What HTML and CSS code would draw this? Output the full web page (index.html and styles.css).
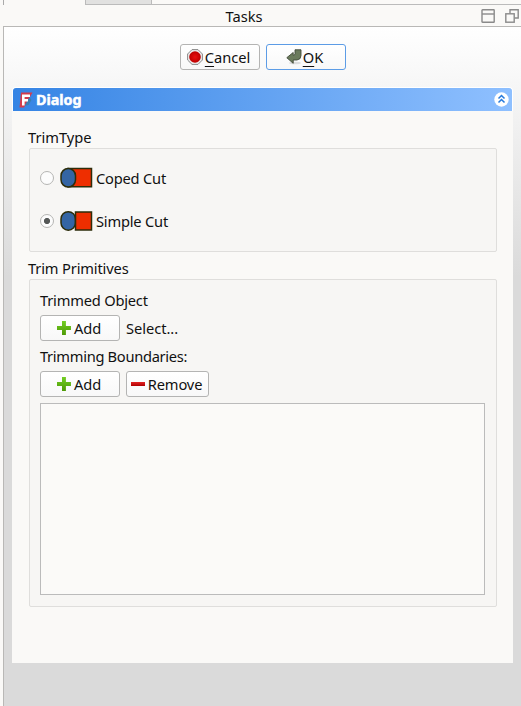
FILE: index.html
```html
<!DOCTYPE html>
<html lang="en">
<head>
<meta charset="utf-8">
<title>Tasks</title>
<link rel="stylesheet" href="styles.css">
</head>
<body>
<div class="tabs"><span class="tab current"></span><span class="tab other"></span><span class="tab-rest"></span></div>
<header class="dock-title">
  <h1>Tasks</h1>
  <div class="dock-icons">
    <svg width="14" height="14" viewBox="0 0 14 14"><rect x="1" y=".75" width="12.2" height="12.5" rx=".5"/><path d="M1 5h12"/></svg>
    <svg width="14" height="14" viewBox="0 0 14 14"><path d="M5 4.5V.8h8.2V9H9.5"/><rect x=".8" y="4.8" width="8.4" height="8.4"/></svg>
  </div>
</header>
<main class="panel">
  <div class="actions">
    <button class="btn cancel"><svg width="16" height="16" viewBox="0 0 16 16"><defs><radialGradient id="red"><stop offset="0" stop-color="#e81010"/><stop offset="1" stop-color="#bd0000"/></radialGradient></defs><path d="M5 .6h6L15.400 5v6L11 15.400H5L.6 11V5z" fill="#eee" stroke="#888"/><circle cx="8" cy="8" r="5.800" fill="url(#red)"/></svg><span><u>C</u>ancel</span></button>
    <button class="btn ok"><svg width="17" height="16" viewBox="0 0 17 16"><ellipse cx="9" cy="14" rx="6" ry="1.300" fill="#ddd"/><path d="M9 .8h6v5.700q0 4-4 4.500H7.200v3.300L.8 8.700l6.400-5.200v2.800q1.800 0 1.800-1.600z" fill="#6b7b5c" stroke="#414a38" stroke-width=".9"/></svg><span><u>O</u>K</span></button>
  </div>
  <section class="task">
    <h2><svg width="14" height="16" viewBox="0 0 14 16"><path d="M2 .5h11.500L11 5 5 15.500H.5z" fill="#d33c4c"/><path d="M10.500 5l2 3-3 5-4 1z" fill="#3b7fb0"/><path d="M4.300 13.500V3.700H11M4.300 8.300H9" fill="none" stroke="#fff" stroke-width="2.600"/></svg><span>Dialog</span><svg class="collapse" width="15" height="15" viewBox="0 0 15 15"><circle cx="7.500" cy="7.500" r="7.200" fill="#fff"/><path d="M4.500 6.500L7.500 3.500 10.500 6.500M4.500 10.500L7.500 7.500 10.500 10.500" fill="none" stroke="#2579dc" stroke-width="1.500"/></svg></h2>
    <div class="content">
      <h3>TrimType</h3>
      <div class="group types">
        <label class="choice"><i class="radio"></i><svg width="33" height="22" viewBox="0 0 33 22"><g stroke="#2d2d0a" stroke-width="1.500"><path d="M8 1.500h23.500v18.300H8z" fill="#ee2e00"/><rect x="1" y="1.500" width="14.500" height="18.500" rx="7.200" fill="#3465a4"/></g></svg><span>Coped Cut</span></label>
        <label class="choice"><i class="radio checked"></i><svg width="33" height="22" viewBox="0 0 33 22"><g stroke="#2d2d0a" stroke-width="1.500"><rect x="1" y="1.700" width="14.500" height="18.500" rx="7.200" fill="#3465a4"/><path d="M15.500 2h16v18h-16z" fill="#ee2e00"/></g></svg><span>Simple Cut</span></label>
      </div>
      <h3 class="second">Trim Primitives</h3>
      <div class="group primitives">
        <div class="text">Trimmed Object</div>
        <div class="row"><button class="btn add"><i class="plus"></i><span>Add</span></button><span class="selection">Select...</span></div>
        <div class="text boundaries">Trimming Boundaries:</div>
        <div class="row"><button class="btn add"><i class="plus"></i><span>Add</span></button><button class="btn remove"><i class="minus"></i><span>Remove</span></button></div>
        <div class="list"></div>
      </div>
    </div>
  </section>
</main>
</body>
</html>
```
FILE: styles.css
```css
* { box-sizing: border-box; }
html, body { height: 100%; }
body { margin: 0; height: 706px; overflow: hidden; display: flex; flex-direction: column; background: #faf9f7; color: #111; font: 14.667px/20px "Noto Sans", sans-serif; }
h1, h2, h3 { margin: 0; font: inherit; }
svg { display: block; flex: none; }
.tabs { display: flex; height: 5px; padding-left: 3px; }
.tab.current { width: 82px; border-left: 1px solid #aaa; }
.tab.other { width: 67px; background: #e1e1e0; border: solid #bbb; border-width: 0 1px 1px; }
.tab-rest { flex: 1; border-bottom: 1px solid #bbb; }
.dock-title { height: 21px; position: relative; }
.dock-title h1 { text-align: center; line-height: 22px; padding-right: 33px; }
.dock-icons { position: absolute; right: 2px; top: 4px; display: flex; gap: 10px; }
.dock-icons svg { fill: none; stroke: #8a8a8a; stroke-width: 1.400; }
.panel { flex: 1; margin-left: 3px; border: solid #b9b8b6; border-width: 1px 0 0 1px; padding: 17px 8px 0; background: linear-gradient(#fff, #dadada 250px); }
.actions { display: flex; justify-content: center; gap: 6px; }
.btn { height: 26px; width: 80px; padding: 0; display: flex; align-items: center; justify-content: center; border: 1px solid #b4b4b3; border-radius: 3px; background: linear-gradient(#fff, #f8f8f8); color: #111; font: inherit; }
.btn u { text-underline-offset: 3px; text-decoration-skip-ink: none; text-decoration-thickness: 1px; }
.cancel { gap: 2px; padding-right: 2px; }
.cancel span { letter-spacing: -.05px; }
.ok { border-color: #5c9ce6; gap: 0; padding-right: 2px; }
.task { margin-top: 17px; border-radius: 4px 4px 0 0; }
.task h2 { height: 24px; border: 1px solid #fff; border-bottom: 0; border-radius: 4px 4px 0 0; background: linear-gradient(90deg, #3584e4, #8fc0ff); color: #fff; display: flex; align-items: center; gap: 3px; padding: 0 3px 0 6px; font-weight: 700; font-size: 14.300px; -webkit-text-stroke: .5px #fff; }
.collapse { margin-left: auto; }
.content { height: 552px; background: #faf9f7; padding: 16px 16px 0; }
.content h3 { height: 21px; }
.content .second { margin-top: 6px; letter-spacing: -.15px; }
.group { margin-left: 1px; border: 1px solid #dfdedc; border-radius: 2px; background: #f7f6f4; }
.types { height: 104px; padding: 18px 10px 0; }
.choice { display: flex; align-items: center; height: 22px; margin-bottom: 21px; letter-spacing: -.2px; }
.choice svg { margin: 0 3px 0 6px; }
.radio { width: 14px; height: 14px; border: 1px solid #b5b5b3; border-radius: 50%; background: #fcfcfc; flex: none; }
.checked { background: radial-gradient(circle, #555857 0 2.700px, #fcfcfc 3.500px); }
.primitives { height: 328px; padding: 10px 11px 0 10px; }
.text { height: 21px; letter-spacing: -.2px; }
.boundaries { letter-spacing: -.3px; }
.selection { letter-spacing: -.05px; }
.row { display: flex; align-items: center; gap: 6px; margin: 4px 0 5px; }
.add { gap: 3px; padding-right: 2px; letter-spacing: -.1px; }
.remove { width: 83px; gap: 3px; padding-right: 2px; letter-spacing: -.12px; }
.plus, .minus { width: 14px; height: 14px; flex: none; }
.plus { background: linear-gradient(#73ce24, #4e9a06); clip-path: polygon(36% 0, 64% 0, 64% 36%, 100% 36%, 100% 64%, 64% 64%, 64% 100%, 36% 100%, 36% 64%, 0 64%, 0 36%, 36% 36%); }
.minus { height: 4px; background: linear-gradient(#e32424, #af0000); }
.list { height: 192px; margin-top: 6px; background: #fbfaf8; border: 1px solid #bbb; }
```
